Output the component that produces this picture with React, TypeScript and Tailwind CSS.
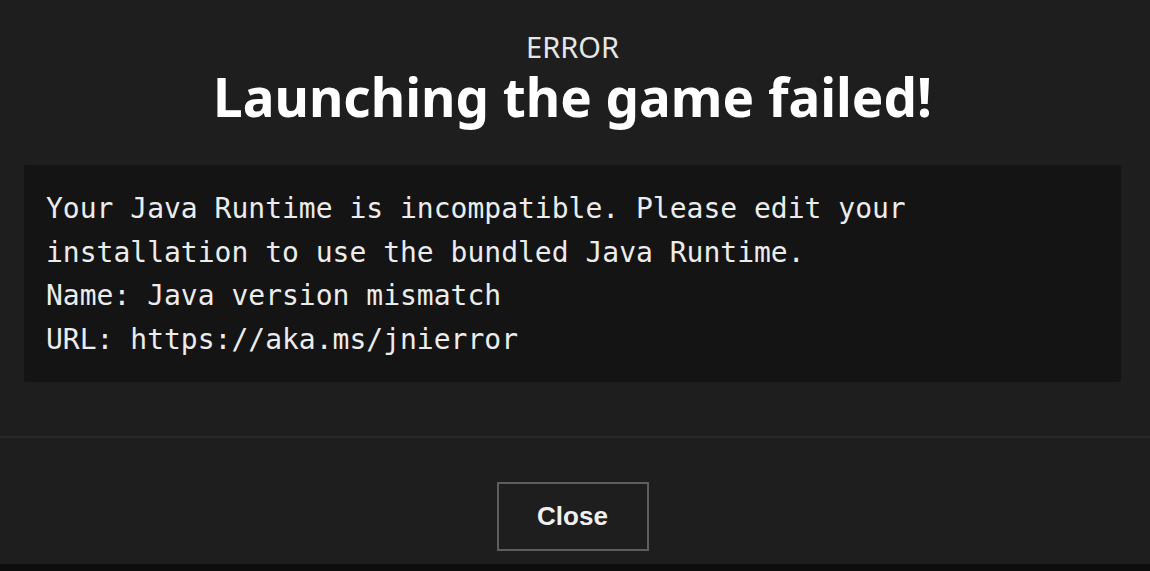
import React from 'react';

const LINES = [
  'Your Java Runtime is incompatible. Please edit your',
  'installation to use the bundled Java Runtime.',
  'Name: Java version mismatch',
  'URL: https://aka.ms/jnierror',
];

export default function App(): React.ReactElement {
  return (
    <div className="min-h-screen bg-[#0d0d0d]">
      <div className="flex h-[564px] flex-col bg-[#1e1e1e]">
        <header className="pr-[5px] pt-[29px] text-center font-['Noto_Sans',sans-serif]">
          <div className="text-[29px] leading-[36px] text-[#e6e6e6]">ERROR</div>
          <h1 className="text-[53px] font-bold leading-[64px] text-white">Launching the game failed!</h1>
        </header>

        <div className="ml-[24px] mr-[29px] mt-[36px] h-[217px] rounded-[3px] bg-[#141414] px-[22px] pt-[22px] pb-[21px] font-['DejaVu_Sans_Mono',monospace] text-[28px] leading-[43.5px] text-[#ececec]">
          {LINES.map((l) => (
            <div key={l} className="whitespace-pre">{l}</div>
          ))}
        </div>

        <div className="mt-[54px] h-[2px] bg-[#292929]" />

        <div className="flex justify-center pr-[5px] pt-[44px]">
          <button
            type="button"
            className="h-[69px] w-[152px] border-2 border-[#5e5e5e] font-['Liberation_Sans',Arial,sans-serif] text-[26px] font-bold text-[#f0f0f0]"
          >
            Close
          </button>
        </div>
      </div>
    </div>
  );
}
